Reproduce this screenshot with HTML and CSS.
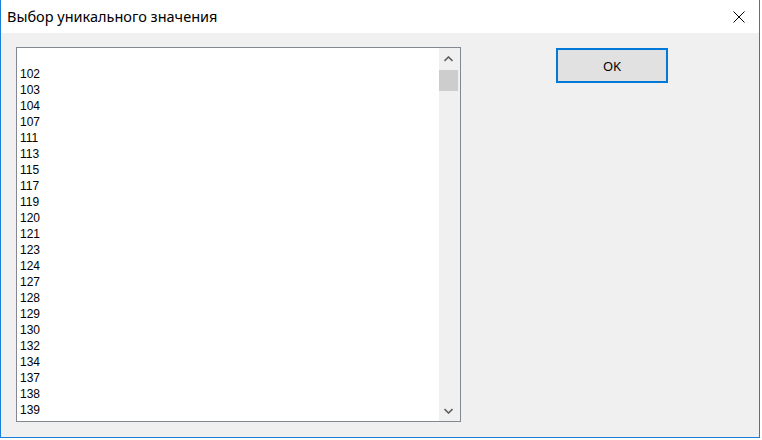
FILE: index.html
```html
<!DOCTYPE html>
<html>
<head>
<meta charset="utf-8">
<link rel="stylesheet" href="styles.css">
</head>
<body>
<div class="window">
  <div class="titlebar">
    <div class="title">Выбор уникального значения</div>
    <div class="close">
      <svg width="12" height="12" viewBox="0 0 12 12"><path d="M0.5 0.5 L11.5 11.5 M11.5 0.5 L0.5 11.5" stroke="#000" stroke-width="1" fill="none"/></svg>
    </div>
  </div>
  <div class="content">
    <div class="listbox">
      <div class="items">
        <div class="item">&nbsp;</div>
        <div class="item">102</div>
        <div class="item">103</div>
        <div class="item">104</div>
        <div class="item">107</div>
        <div class="item">111</div>
        <div class="item">113</div>
        <div class="item">115</div>
        <div class="item">117</div>
        <div class="item">119</div>
        <div class="item">120</div>
        <div class="item">121</div>
        <div class="item">123</div>
        <div class="item">124</div>
        <div class="item">127</div>
        <div class="item">128</div>
        <div class="item">129</div>
        <div class="item">130</div>
        <div class="item">132</div>
        <div class="item">134</div>
        <div class="item">137</div>
        <div class="item">138</div>
        <div class="item">139</div>
        <div class="item">141</div>
      </div>
      <div class="scrollbar">
        <div class="arrow">
          <svg width="9" height="6" viewBox="0 0 9 6"><path d="M0.5 5 L4.5 1 L8.5 5" stroke="#606060" stroke-width="1.6" fill="none"/></svg>
        </div>
        <div class="thumb"></div>
        <div class="track"></div>
        <div class="arrow">
          <svg width="9" height="6" viewBox="0 0 9 6"><path d="M0.5 1 L4.5 5 L8.5 1" stroke="#606060" stroke-width="1.6" fill="none"/></svg>
        </div>
      </div>
    </div>
    <button class="ok">OK</button>
  </div>
</div>
</body>
</html>
```
FILE: styles.css
```css
html, body {
  margin: 0;
  padding: 0;
  background: #ffffff;
}
.window {
  width: 758px;
  height: 437px;
  border-left: 1px solid #1a7fd6;
  border-right: 1px solid #1a7fd6;
  border-bottom: 1px solid #1a7fd6;
  display: flex;
  flex-direction: column;
  background: #f0f0f0;
}
.titlebar {
  height: 33px;
  background: #ffffff;
  display: flex;
  align-items: center;
  justify-content: space-between;
}
.title {
  font-family: "Noto Sans", sans-serif;
  font-size: 14.5px;
  color: #000;
  padding-left: 6px;
  padding-bottom: 1px;
}
.close {
  width: 46px;
  height: 33px;
  display: flex;
  align-items: center;
  justify-content: center;
  margin-right: -3px;
}
.close svg { display: block; margin-top: 1px; }
.content {
  flex: 1;
  display: flex;
  align-items: flex-start;
  padding: 14px 0 0 15px;
}
.listbox {
  width: 443px;
  height: 373px;
  border: 1px solid #828790;
  background: #ffffff;
  display: flex;
  overflow: hidden;
}
.items {
  flex: 1;
  padding: 2px 0 0 3px;
  overflow: hidden;
  font-family: "Liberation Sans", Arial, sans-serif;
  font-size: 12px;
  color: #000;
}
.item {
  height: 16px;
  line-height: 16px;
}
.scrollbar {
  width: 21px;
  display: flex;
  flex-direction: column;
  background: #f0f0f0;
}
.arrow {
  height: 21px;
  display: flex;
  align-items: center;
  justify-content: center;
  padding-right: 2px;
}
.thumb {
  height: 21px;
  margin: 1px 2px 0 0;
  background: #cdcdcd;
}
.track { flex: 1; }
.ok {
  width: 112px;
  height: 35px;
  margin: 1px 0 0 95px;
  border: 2px solid #0078d7;
  background: #e1e1e1;
  font-family: "Noto Sans", sans-serif;
  font-size: 13px;
  color: #000;
  padding: 0;
}
```
